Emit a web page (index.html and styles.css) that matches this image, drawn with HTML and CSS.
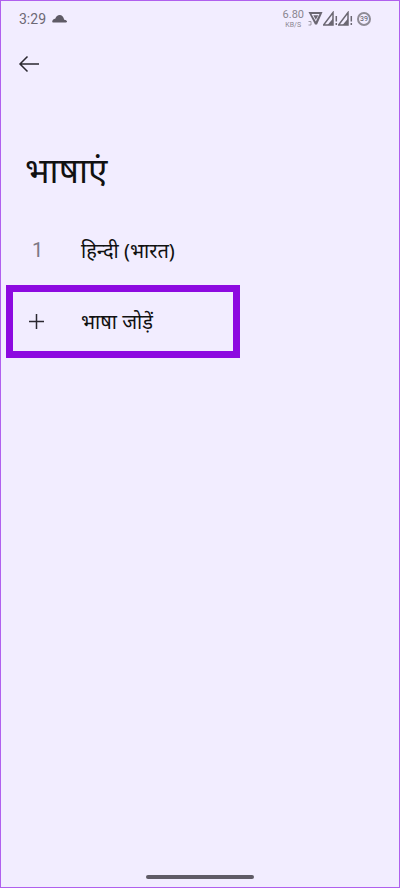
FILE: index.html
```html
<!DOCTYPE html>
<html lang="hi">
<head>
    <meta charset="UTF-8">
    <meta name="viewport" content="width=device-width, initial-scale=1.0">
    <title>भाषाएं</title>
    <link rel="stylesheet" href="styles.css">
</head>
<body>
    <div class="screen">
        <div class="statusbar">
            <div class="status-left">
                <span class="time">3:29</span>
                <svg class="cloud" width="15" height="9" viewBox="0 0 15 9"><path d="M1 8.500h13a1 1 0 0 0 .6-1.800c-.6-.5-1.400-.9-2.400-1C11.600 2.800 9.800 1 7.700 1 5.700 1 4 2.300 3.400 4.500 1.700 4.800.3 6 .2 7.600c0 .5.300.9.800.9z" fill="#5f5b66"/></svg>
            </div>
            <div class="status-right">
                <div class="speed"><span class="speed-num">6.80</span><span class="speed-unit">KB/S</span></div>
                <svg class="shield" width="15" height="15" viewBox="0 0 15 15"><path d="M.5 1h14L9 13.500H7z" fill="#6b6772"/><path d="M3.500 3h8L7.800 10.500z" fill="#f2edff"/><path d="M5.300 4.200h5L7.800 8.800z" fill="#6b6772"/><path d="M.5 10.500h2.500v3.500H.5" fill="none" stroke="#8a8690" stroke-width=".8"/></svg>
                <svg class="signal" width="15" height="15" viewBox="0 0 15 15"><path d="M.5 14 10 1.500V14z" fill="none" stroke="#6b6772" stroke-width="1.500"/><path d="M4.500 14 10 7.500V14z" fill="#6b6772"/><path d="M13.300 5v5.500M13.300 12v2" stroke="#6b6772" stroke-width="1.500"/></svg>
                <svg class="signal" width="15" height="15" viewBox="0 0 15 15"><path d="M.5 14 10 1.500V14z" fill="none" stroke="#6b6772" stroke-width="1.500"/><path d="M4.500 14 10 7.500V14z" fill="#6b6772"/><path d="M13.300 5v5.500M13.300 12v2" stroke="#6b6772" stroke-width="1.500"/></svg>
                <div class="battery"><span>39</span></div>
            </div>
        </div>

        <div class="toolbar">
            <svg width="22" height="18" viewBox="0 0 22 18"><path d="M21 9H2M9.500 1.500 2 9l7.500 7.500" fill="none" stroke="#2b2830" stroke-width="1.500"/></svg>
        </div>

        <h1 class="title">भाषाएं</h1>

        <ul class="langs">
            <li class="lang">
                <span class="lang-mark num">1</span>
                <span class="lang-name">हिन्दी (भारत)</span>
            </li>
            <li class="lang add">
                <span class="lang-mark">
                    <svg width="17" height="17" viewBox="0 0 17 17"><path d="M8.500 1v15M1 8.500h15" stroke="#2b2830" stroke-width="1.500"/></svg>
                </span>
                <span class="lang-name">भाषा जोड़ें</span>
            </li>
        </ul>

        <div class="navbar"><span class="home"></span></div>
    </div>
</body>
</html>
```

FILE: styles.css
```css
* {
    box-sizing: border-box;
}

html, body {
    margin: 0;
    padding: 0;
}

body {
    font-family: "Noto Sans", "Noto Sans Devanagari", "Lohit Devanagari", Roboto, sans-serif;
    color: #111;
}

.screen {
    width: 400px;
    height: 888px;
    background: #f2edff;
    border: 1px solid #b060ee;
    display: flex;
    flex-direction: column;
    overflow: hidden;
}

.statusbar {
    height: 35px;
    padding: 0 28px 0 18px;
    display: flex;
    align-items: center;
    justify-content: space-between;
}

.status-left {
    display: flex;
    align-items: center;
    gap: 6px;
}

.time {
    font-family: Roboto, sans-serif;
    font-size: 14px;
    color: #6d6975;
}

.status-right {
    display: flex;
    align-items: center;
    color: #8a8690;
}

.speed {
    display: flex;
    flex-direction: column;
    align-items: center;
    margin-right: 4px;
    font-family: Roboto, sans-serif;
}

.speed-num {
    font-size: 11px;
    line-height: 12px;
}

.speed-unit {
    font-size: 7px;
    line-height: 8px;
}

.battery {
    width: 14px;
    height: 14px;
    margin-left: 4px;
    border: 2px solid #8f8b96;
    border-radius: 50%;
    display: flex;
    align-items: center;
    justify-content: center;
}

.battery span {
    font-family: Roboto, sans-serif;
    font-size: 7px;
    color: #55515c;
}

.toolbar {
    height: 56px;
    padding: 0 0 0 17px;
    display: flex;
    align-items: center;
}

.title {
    margin: 53px 0 0 24px;
    font-size: 35px;
    font-weight: 400;
    line-height: 50px;
    color: #111;
}

.langs {
    list-style: none;
    margin: 26px 0 0 5px;
    padding: 0;
    width: 234px;
    display: flex;
    flex-direction: column;
    gap: 6px;
}

.lang {
    height: 58px;
    display: flex;
    align-items: center;
}

.lang.add {
    height: 73px;
    border: 7px solid #8d0ae0;
}

.lang-mark {
    width: 75px;
    padding-left: 23px;
    display: flex;
    align-items: center;
    flex: none;
    font-family: Roboto, sans-serif;
}

.lang.add .lang-mark {
    width: 68px;
    padding-left: 15px;
}

.num {
    font-size: 20px;
    color: #7d7983;
    padding-left: 26px;
}

.lang-name {
    font-size: 20px;
    font-weight: 400;
    white-space: nowrap;
}

.navbar {
    margin-top: auto;
    height: 24px;
    display: flex;
    justify-content: center;
    padding-top: 12px;
}

.home {
    width: 108px;
    height: 4px;
    border-radius: 2px;
    background: #5f5b66;
}
```
